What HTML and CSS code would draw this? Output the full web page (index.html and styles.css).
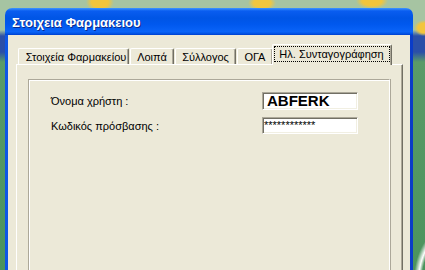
FILE: index.html
```html
<!DOCTYPE html>
<html lang="el">
<head>
    <meta charset="UTF-8">
    <title>Στοιχεια Φαρμακειου</title>
    <link rel="stylesheet" href="styles.css">
</head>
<body>
    <div class="window">
        <div class="titlebar">
            <span class="title">Στοιχεια Φαρμακειου</span>
        </div>
        <div class="client">
            <div class="tabs">
                <div class="tab t1">Στοιχεία Φαρμακείου</div>
                <div class="tab t2">Λοιπά</div>
                <div class="tab t3">Σύλλογος</div>
                <div class="tab t4">ΟΓΑ</div>
                <div class="tab t5 selected"><span class="focus">Ηλ. Συνταγογράφηση</span></div>
            </div>
            <div class="panel">
                <div class="group">
                    <label class="label">Όνομα χρήστη :</label>
                    <div class="field user">ABFERK</div>
                    <label class="label">Κωδικός πρόσβασης :</label>
                    <div class="field pass">************</div>
                </div>
            </div>
        </div>
    </div>
</body>
</html>
```

FILE: styles.css
```css
body {
    margin: 0;
    width: 425px;
    height: 270px;
    overflow: hidden;
    font-family: 'Liberation Sans', Arial, sans-serif;
    font-size: 11px;
    color: #000;
    background:
        radial-gradient(ellipse 14px 10px at 100px 2px, #f2c53c 60%, transparent 100%),
        radial-gradient(ellipse 14px 8px at 262px 3px, #f0c640 60%, transparent 100%),
        radial-gradient(ellipse 16px 8px at 372px 1px, #f2c53c 60%, transparent 100%),
        radial-gradient(ellipse 10px 8px at 424px 28px, #f2c53c 60%, transparent 100%),
        radial-gradient(ellipse 40px 60px at 450px 280px, transparent 70%, #ffffff 78%, transparent 90%),
        linear-gradient(#a6c4a2 0, #a6c4a2 30px, #2a4fa8 36px, #2a4fa8 52px, #5a9b68 62px, #4b935d 100%);
}
.window {
    margin: 8px 12px 0 5px;
}
.titlebar {
    height: 27px;
    border-radius: 7px 7px 0 0;
    background: linear-gradient(#3d95ff 0, #0a5df0 3px, #0055e5 10px, #0058ee 60%, #0a64f8 88%, #0050e0 96%, #003dcc 100%);
    display: flex;
    align-items: center;
    padding-left: 7px;
    box-sizing: border-box;
}
.title {
    color: #fff;
    font-weight: bold;
    font-size: 13px;
    text-shadow: 1px 1px 0 #0b2a8c;
    margin-top: 1px;
}
.client {
    background-color: #ece9d8;
    border-left: 3px solid #0d56e6;
    border-right: 3px solid #0a3cc8;
    height: 235px;
    padding: 9px 7px 0 8px;
    display: flex;
    flex-direction: column;
}
.tabs {
    display: flex;
    align-items: flex-end;
    height: 20px;
    padding-left: 2px;
}
.tab {
    height: 16px;
    box-sizing: border-box;
    margin-right: 1px;
    border-top: 1px solid #fff;
    border-left: 1px solid #fff;
    border-right: 1px solid #716f64;
    border-radius: 2px 2px 0 0;
    box-shadow: inset -1px 0 0 #aca899;
    display: flex;
    align-items: center;
    justify-content: center;
    padding-top: 1px;
    white-space: nowrap;
}
.t1 { width: 111px; padding-left: 5px; }
.t2 { width: 44px; }
.t3 { width: 61px; }
.t4 { width: 36px; }
.tab.selected {
    width: 120px;
    height: 21px;
    margin-left: -2px;
    margin-bottom: -1px;
    position: relative;
    z-index: 1;
    background-color: #ece9d8;
    align-items: flex-start;
    padding: 1px 1px 0 0;
}
.focus {
    border: 1px dotted #000;
    width: 116px;
    height: 16px;
    box-sizing: border-box;
    text-align: center;
    line-height: 14px;
}
.panel {
    flex: 1;
    border-top: 1px solid #fff;
    border-left: 1px solid #fff;
    border-right: 1px solid #716f64;
    box-shadow: inset -1px 0 0 #aca899;
    padding: 14px 11px 0 11px;
    display: flex;
}
.group {
    flex: 1;
    border-top: 1px solid #aca899;
    border-left: 1px solid #aca899;
    border-right: 1px solid #fff;
    box-shadow: inset 1px 1px 0 #fff, 1px 0 0 #aca899;
    margin-right: 1px;
    display: grid;
    grid-template-columns: 211px 96px;
    grid-template-rows: 18px 17px;
    row-gap: 7px;
    align-content: start;
    padding: 12px 0 0 22px;
}
.label {
    line-height: 18px;
    white-space: nowrap;
}
.field {
    background-color: #fff;
    border: 1px solid;
    border-color: #aca899 #fff #fff #aca899;
    box-shadow: inset 1px 1px 0 #716f64, inset -1px -1px 0 #f1efe2;
    box-sizing: border-box;
    white-space: nowrap;
    overflow: hidden;
}
.user {
    font-size: 15px;
    font-weight: bold;
    line-height: 16px;
    padding-left: 4px;
}
.pass {
    font-size: 11px;
    line-height: 15px;
    padding-left: 1px;
}
```
